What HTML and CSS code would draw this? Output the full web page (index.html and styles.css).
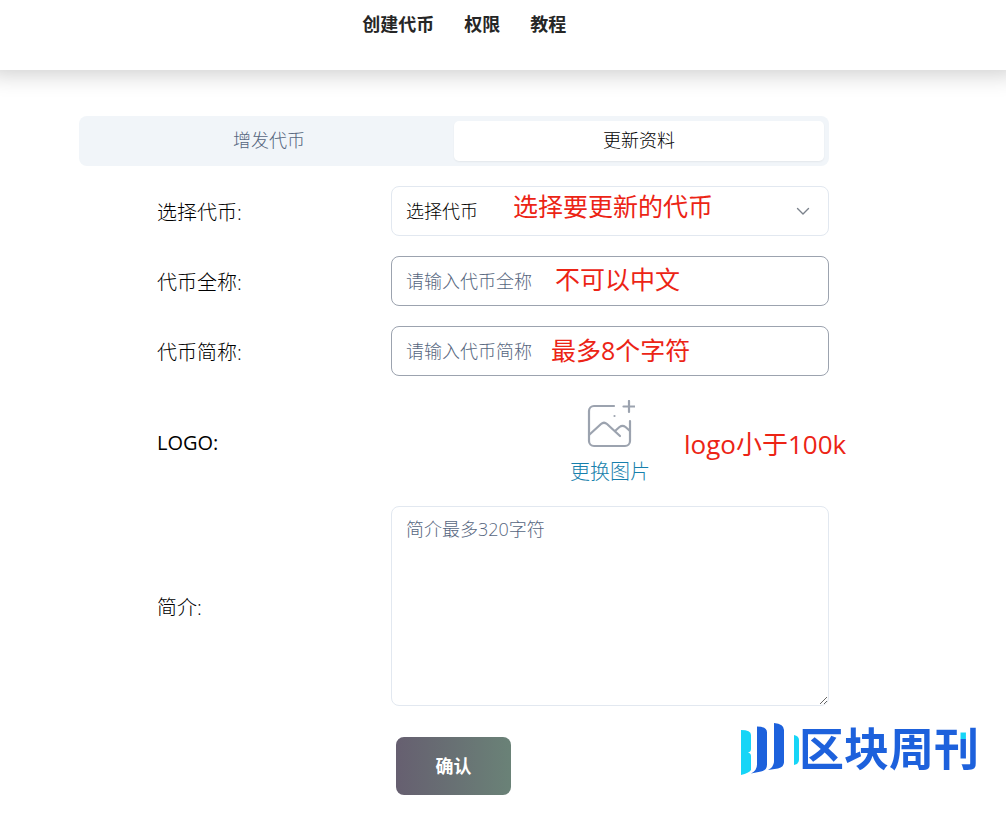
FILE: index.html
```html
<!DOCTYPE html>
<html lang="zh-CN">
<head>
<meta charset="utf-8">
<meta name="viewport" content="width=device-width, initial-scale=1">
<title>更新资料</title>
<link rel="stylesheet" href="styles.css">
</head>
<body>
<header class="header">
  <nav class="nav">
    <a href="#create">创建代币</a>
    <a href="#permission">权限</a>
    <a href="#tutorial">教程</a>
  </nav>
</header>
<main class="main">
  <div class="tabs" role="tablist">
    <button class="tab" type="button" role="tab" aria-selected="false">增发代币</button>
    <button class="tab tab-active" type="button" role="tab" aria-selected="true">更新资料</button>
  </div>
  <form class="form">
    <div class="row">
      <label class="label" for="token">选择代币:</label>
      <div class="field">
        <select class="control select" id="token"><option>选择代币</option></select>
        <svg class="chevron" width="16" height="16" viewBox="0 0 16 16" fill="none" stroke="#7b828c" stroke-width="1.4" stroke-linecap="round" stroke-linejoin="round" aria-hidden="true"><path d="M2.5 5.5 8 11l5.500-5.500"/></svg>
        <span class="hint hint-token">选择要更新的代币</span>
      </div>
    </div>
    <div class="row">
      <label class="label" for="fullname">代币全称:</label>
      <div class="field">
        <input class="control input" id="fullname" type="text" placeholder="请输入代币全称">
        <span class="hint hint-fullname">不可以中文</span>
      </div>
    </div>
    <div class="row">
      <label class="label" for="symbol">代币简称:</label>
      <div class="field">
        <input class="control input" id="symbol" type="text" placeholder="请输入代币简称">
        <span class="hint hint-symbol">最多8个字符</span>
      </div>
    </div>
    <div class="row">
      <span class="label label-latin" id="logo-label">LOGO:</span>
      <div class="field">
        <button class="upload" type="button" id="logo-upload" aria-labelledby="logo-label logo-upload">
          <svg width="50" height="50" viewBox="0 0 50 50" fill="none" stroke="#9ca3af" stroke-width="2.200" stroke-linecap="round" stroke-linejoin="round" aria-hidden="true">
            <path d="M29 6H9a5 5 0 0 0-5 5v30a5 5 0 0 0 5 5h31a5 5 0 0 0 5-5V21"/>
            <path d="M44 1v11M38.500 6.500H49.500"/>
            <path d="M4 35 16 24q3-2.500 6 0L35 36"/>
            <path d="m30 31 4.500-4q3-2.300 6 0l4.500 4"/>
            <path d="M29.500 16h.01"/>
          </svg>
          <span>更换图片</span>
        </button>
        <span class="hint hint-logo">logo小于100k</span>
      </div>
    </div>
    <div class="row">
      <label class="label" for="intro">简介:</label>
      <div class="field">
        <textarea class="control textarea" id="intro" placeholder="简介最多320字符"></textarea>
      </div>
    </div>
    <div class="row actions">
      <button class="submit" type="submit">确认</button>
    </div>
  </form>
</main>
<div class="brand">
  <svg class="brand-mark" width="60" height="54" viewBox="0 0 60 54" aria-hidden="true">
    <path fill="#16d5f7" d="M2 7q10 0 10 5v14q0 3-3 3.500 3 .5 3 3.500v14q-2 3-10 5z"/>
    <path fill="#1d61dc" d="M18 3.500q10 0 10 6v32q0 6-6 7l-10 2q6-3 6-9zM35 0q10 1 10 7v32q0 5-6 6.500l-10 1.500q6-3 6-9z"/>
    <path fill="#16d5f7" d="M55 12q5 1 5 5v20q0 4-5 5z"/>
  </svg>
  <span class="brand-name">区块周刊</span>
</div>
</body>
</html>
```

FILE: styles.css
```css
* {
  box-sizing: border-box;
}

body {
  margin: 0;
  background: #fff;
  color: #000;
  font-family: "Open Sans", "Noto Sans CJK SC", sans-serif;
  font-size: 18px;
  line-height: 24px;
}

button,
input,
select,
textarea {
  font: inherit;
  color: inherit;
}

.header {
  height: 70px;
  padding: 12px 0 0 36%;
  background: #fff;
  box-shadow: 0 -8px 22px 12px rgba(0, 0, 0, 0.2);
}

.nav {
  display: flex;
  gap: 30px;
}

.nav a {
  color: #262626;
  font-weight: 700;
  text-decoration: none;
}

.main {
  padding: 46px 177px 0 79px;
}

.tabs {
  display: grid;
  grid-template-columns: 1fr 1fr;
  padding: 5px;
  border-radius: 8px;
  background: #f1f5f9;
}

.tab {
  height: 40px;
  padding: 0 0 2px;
  border: 0;
  border-radius: 5px;
  background: transparent;
  color: #56667e;
  font-weight: 300;
}

.tab-active {
  background: #fff;
  color: #000;
  box-shadow: 0 1px 2px rgba(0, 0, 0, 0.06);
}

.form {
  display: flex;
  flex-direction: column;
  gap: 20px;
  padding: 20px 0 0 78px;
}

.row {
  display: grid;
  grid-template-columns: 234px 1fr;
  align-items: center;
}

.label {
  padding-top: 3px;
  font-size: 20px;
  font-weight: 300;
}

.label-latin {
  font-weight: 400;
}

.field {
  position: relative;
  display: flex;
  justify-content: center;
}

.control {
  width: 100%;
  height: 50px;
  padding: 0 14px;
  border: 1px solid #e2e8f0;
  border-radius: 8px;
  background: #fff;
  font-weight: 300;
}

.control::placeholder {
  color: #56667e;
  opacity: 1;
}

.select {
  appearance: none;
}

.chevron {
  position: absolute;
  top: 17px;
  right: 18px;
  pointer-events: none;
}

.input {
  border-color: #9ca3af;
}

.textarea {
  display: block;
  height: 200px;
  padding: 10px 14px;
}

.hint {
  position: absolute;
  color: #ec2415;
  font-size: 25px;
  line-height: 32px;
  white-space: nowrap;
  pointer-events: none;
}

.hint-token {
  top: 4px;
  left: 122px;
}

.hint-fullname {
  top: 7px;
  left: 164px;
}

.hint-symbol {
  top: 8px;
  left: 160px;
}

.hint-logo {
  top: 32px;
  left: 293px;
  font-size: 26px;
}

.upload {
  display: flex;
  flex-direction: column;
  align-items: center;
  gap: 10px;
  height: 90px;
  padding: 4px 0 0;
  border: 0;
  background: transparent;
  color: #167fac;
  font-size: 20px;
  font-weight: 300;
}

.actions {
  padding: 11px 0 20px 5px;
}

.submit {
  grid-column: 2;
  justify-self: start;
  width: 115px;
  height: 58px;
  border: 0;
  border-radius: 8px;
  background: linear-gradient(90deg, #665f70, #6a8277);
  color: #fff;
  font-weight: 700;
}

.brand {
  position: absolute;
  top: 723px;
  right: 27px;
  display: flex;
  align-items: flex-start;
}

.brand-name {
  background: linear-gradient(#16d5f7, #16d5f7) 160px 0 / 9px 16px no-repeat #1d61dc;
  background-clip: text;
  color: transparent;
  font-family: "Noto Sans CJK SC", sans-serif;
  font-size: 45px;
  font-weight: 700;
  line-height: 48px;
}
```
